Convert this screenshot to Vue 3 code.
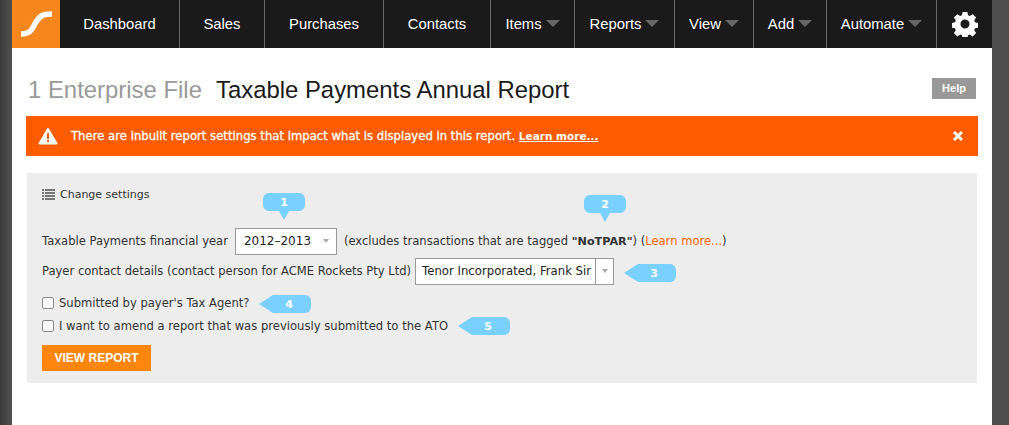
<script setup>
const navItems = [
  { label: 'Dashboard' }, { label: 'Sales' }, { label: 'Purchases' }, { label: 'Contacts' },
  { label: 'Items', caret: true }, { label: 'Reports', caret: true }, { label: 'View', caret: true },
  { label: 'Add', caret: true }, { label: 'Automate', caret: true }
]
</script>

<template>
  <div class="shell">
    <div class="page">
      <nav class="nav">
        <div class="logo">
          <svg width="48" height="48" viewBox="0 0 48 48"><path d="M9 34 C20 34 20 28 24 22 C28 16 30 14 40 14" fill="none" stroke="#fff" stroke-width="5.5"/></svg>
        </div>
        <div v-for="item in navItems" :key="item.label" class="nav-item">
          <span>{{ item.label }}</span><i v-if="item.caret" class="caret"></i>
        </div>
        <div class="gear">
          <svg width="26" height="26" viewBox="0 0 26 26"><path fill="#fff" fill-rule="evenodd" d="M10.6 1h4.8l.6 3.3 1.9.8 2.8-1.9 3.4 3.4-1.9 2.8.8 1.9 3 .6v4.8l-3 .6-.8 1.9 1.9 2.8-3.4 3.4-2.8-1.9-1.9.8-.6 3h-4.8l-.6-3-1.9-.8-2.8 1.9-3.4-3.4 1.9-2.8-.8-1.9-3-.6v-4.800l3-.6.8-1.900-1.900-2.800 3.400-3.400 2.800 1.900 1.900-.8zM13 8.500a4.500 4.500 0 1 0 0 9 4.500 4.500 0 0 0 0-9z"/></svg>
        </div>
      </nav>

      <main class="content">
        <header class="title-row">
          <h1 class="title"><span class="file">1 Enterprise File</span><span>Taxable Payments Annual Report</span></h1>
          <a class="help">Help</a>
        </header>

        <div class="alert">
          <svg class="warn" width="20" height="18" viewBox="0 0 20 18"><path fill="#fff" stroke="#fff" stroke-width="2" stroke-linejoin="round" d="M10 2 L18.500 16.500 H1.500 Z"/><rect x="9" y="6" width="2" height="6" fill="#f60"/><rect x="9" y="13" width="2" height="2" fill="#f60"/></svg>
          <span class="alert-text">There are inbuilt report settings that impact what is displayed in this report. <u>Learn more...</u></span>
          <svg class="close" width="12" height="12" viewBox="0 0 12 12"><path d="M2 2 L10 10 M10 2 L2 10" stroke="#fff" stroke-width="3"/></svg>
        </div>

        <section class="panel">
          <div class="change">
            <svg width="13" height="11" viewBox="0 0 13 11"><path fill="#777" d="M0 0h2v2H0zM3 0h10v2H3zM0 3h2v2H0zM3 3h10v2H3zM0 6h2v2H0zM3 6h10v2H3zM0 9h2v2H0zM3 9h10v2H3z"/></svg>
            <span>Change settings</span>
          </div>

          <div class="row year-row">
            <span>Taxable Payments financial year</span>
            <div class="select year"><span>2012–2013</span><i class="mini-caret"></i></div>
            <span>(excludes transactions that are tagged <b>"NoTPAR"</b>) (<a class="link">Learn more...</a>)</span>
            <svg class="callout c1" width="42" height="28" viewBox="0 0 42 28"><path fill="#7ad1ff" d="M6 0h30a6 6 0 0 1 6 6v6a6 6 0 0 1-6 6h-10l-5 9-5-9H6a6 6 0 0 1-6-6V6a6 6 0 0 1 6-6z"/><text x="21" y="13" class="cnum">1</text></svg>
            <svg class="callout c2" width="42" height="28" viewBox="0 0 42 28"><path fill="#7ad1ff" d="M6 0h30a6 6 0 0 1 6 6v6a6 6 0 0 1-6 6h-10l-5 9-5-9H6a6 6 0 0 1-6-6V6a6 6 0 0 1 6-6z"/><text x="21" y="13" class="cnum">2</text></svg>
          </div>

          <div class="row contact-row">
            <span>Payer contact details (contact person for ACME Rockets Pty Ltd)</span>
            <div class="select contact"><span class="contact-name">Tenor Incorporated, Frank Sir</span><span class="contact-btn"><i class="mini-caret"></i></span></div>
            <svg class="callout c3" width="52" height="18" viewBox="0 0 52 18"><path fill="#7ad1ff" d="M0 9 L14 0 H46 a6 6 0 0 1 6 6 v6 a6 6 0 0 1-6 6 H14 Z"/><text x="30" y="13" class="cnum">3</text></svg>
          </div>

          <label class="check-row first"><span class="box"></span><span>Submitted by payer's Tax Agent?</span>
            <svg class="callout c4" width="52" height="18" viewBox="0 0 52 18"><path fill="#7ad1ff" d="M0 9 L14 0 H46 a6 6 0 0 1 6 6 v6 a6 6 0 0 1-6 6 H14 Z"/><text x="30" y="13" class="cnum">4</text></svg>
          </label>
          <label class="check-row"><span class="box"></span><span class="amend">I want to amend a report that was previously submitted to the ATO</span>
            <svg class="callout c5" width="52" height="18" viewBox="0 0 52 18"><path fill="#7ad1ff" d="M0 9 L14 0 H46 a6 6 0 0 1 6 6 v6 a6 6 0 0 1-6 6 H14 Z"/><text x="30" y="13" class="cnum">5</text></svg>
          </label>

          <button class="view">VIEW REPORT</button>
        </section>
      </main>
    </div>
  </div>
</template>

<style>
html, body { margin: 0; background: #4d4d4d; }
</style>

<style scoped>
.shell {
  width: 1009px; height: 425px; overflow: hidden; box-sizing: border-box;
  padding: 0 17px 0 12px;
  background: linear-gradient(90deg, #3c3c3c 0, #505050 12px, #4d4d4d 100%);
  font-family: "DejaVu Sans", sans-serif; color: #333;
}
.page { background: #fff; height: 425px; }
.nav {
  display: grid; height: 48px; background: #1a1a1a; color: #fff;
  grid-template-columns: 48px 120px 85px 119px 107px 84px 100px 79px 73px 110px 55px;
  font-family: "Liberation Sans", sans-serif; font-size: 14.8px;
}
.logo { background: #f6871f; }
.logo svg { display: block; }
.nav-item { display: flex; align-items: center; justify-content: center; border-right: 1px solid #666; box-sizing: border-box; padding-bottom: 1px; }
.caret { width: 0; height: 0; margin-left: 4px; border-style: solid; border-width: 7px 7px 0; border-color: #666 transparent transparent; }
.gear { display: flex; align-items: center; justify-content: center; }
.content { padding: 0 14px; }
.title-row { display: flex; justify-content: space-between; align-items: flex-start; padding-top: 26px; height: 68px; box-sizing: border-box; }
.title { margin: 0; font: 400 23.9px/32px "Liberation Sans", sans-serif; color: #1a1a1a; padding-left: 2px; display: flex; gap: 14px; }
.file { color: #999; }
.help { margin: 4px 2px 0 0; background: #999; color: #fff; width: 44px; height: 21px; font: 700 11px/21px "Liberation Sans", sans-serif; text-align: center; }
.alert { height: 40px; background: #ff5c00; color: #fff; display: flex; align-items: center; padding: 0 14px 0 12px; font-size: 11.66px; }
.warn { flex: none; }
.alert-text { margin-left: 13px; flex: 1; -webkit-text-stroke: 0.3px #fff; }
.alert-text u { font-size: 10.5px; font-weight: 700; -webkit-text-stroke: 0; }
.panel { margin: 17px 1px 0; height: 210px; background: #ededed; padding: 14px 15px; box-sizing: border-box; font-size: 11.55px; position: relative; }
.change { display: flex; align-items: center; gap: 5px; height: 14px; font-size: 11px; }
.row { display: flex; align-items: center; gap: 7px; }
.year-row { margin-top: 26px; height: 28px; }
.contact-row { margin-top: 2px; height: 28px; gap: 4px; }
.select { background: #fff; border: 1px solid #999; box-sizing: border-box; height: 27px; display: flex; align-items: center; color: #222; font-size: 12px; }
.year { width: 102px; padding: 0 7px 0 8px; justify-content: space-between; }
.contact { width: 199px; }
.contact-name { flex: 1; padding-left: 6px; white-space: nowrap; font-size: 11.7px; }
.contact-btn { width: 17px; height: 100%; border-left: 1px solid #999; display: flex; align-items: center; justify-content: center; }
.mini-caret { width: 0; height: 0; border-style: solid; border-width: 4px 3.5px 0; border-color: #aaa transparent transparent; }
.link { color: #f60; }
b { color: #333; font-size: 11.2px; }
.amend { font-size: 11.6px; }
.callout { position: absolute; }
.cnum { fill: #fff; font: 700 11px "DejaVu Sans", sans-serif; text-anchor: middle; }
.c1 { left: 236px; top: 20px; }
.c2 { left: 557px; top: 22px; }
.c3 { left: 597px; top: 91px; }
.c4 { left: 232px; top: 122px; }
.c5 { left: 431px; top: 144px; }
.check-row { display: flex; align-items: center; gap: 5px; height: 16px; }
.first { margin-top: 10px; }
.first + .check-row { margin-top: 7px; }
.box { width: 10px; height: 10px; border: 1px solid #888; border-radius: 2px; background: #fafafa; }
.view { display: block; margin-top: 11px; width: 109px; height: 26px; background: #ff860d; color: #fff; border: 0; padding: 0; font: 700 12px "Liberation Sans", sans-serif; }
.close { flex: none; }
</style>
